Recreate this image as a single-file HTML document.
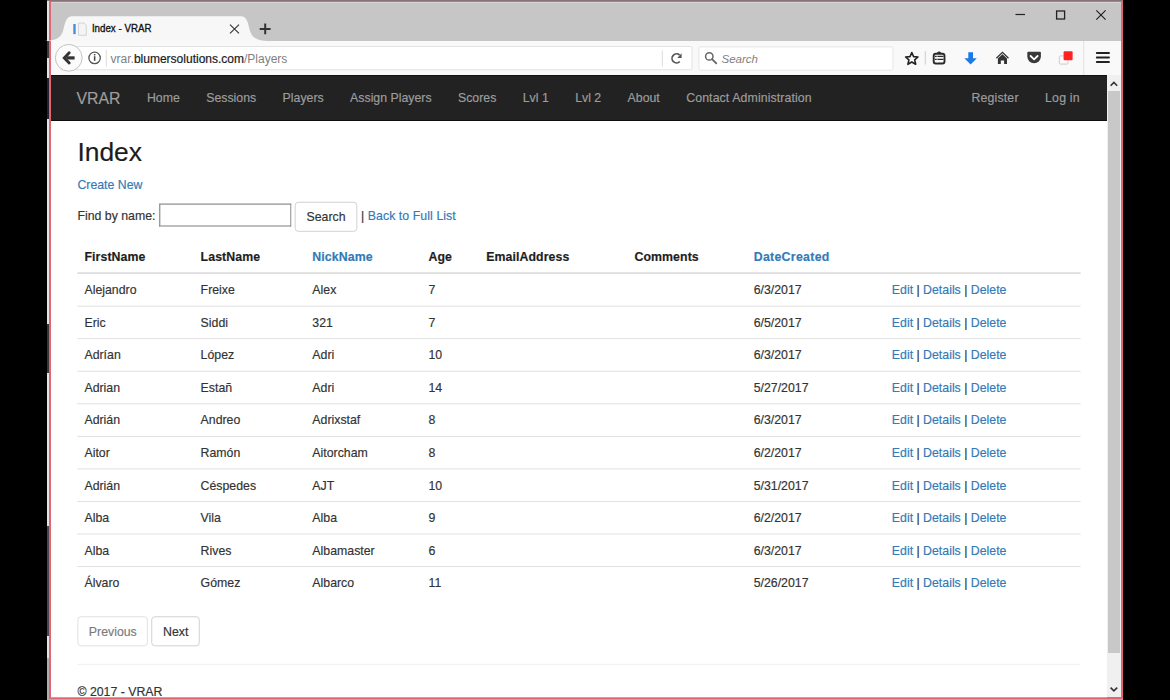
<!DOCTYPE html>
<html><head><meta charset="utf-8">
<style>
*{box-sizing:border-box}
html,body{margin:0;padding:0}
body{width:1170px;height:700px;background:#000;position:relative;overflow:hidden;font-family:"Liberation Sans",sans-serif}
.abs{position:absolute}
#strip{left:47px;top:0;width:2px;height:700px;background:#dfe6e6}
#win{left:49px;top:1px;width:1074px;height:698px;border:2px solid #e46474;border-top-width:1px;background:#cfd6d6;overflow:hidden}
#botstrip{left:49px;top:699px;width:1074px;height:1px;background:#9fb0b0}
/* chrome coordinates relative to body via absolute in body */
#tabbar{left:51px;top:3px;width:1070px;height:38px;background:#c6c6c6}
#toolbar{left:51px;top:41px;width:1070px;height:34px;background:#f9f9f9}
.ttxt{font-size:11.5px;color:#111}
#page{left:51px;top:76px;width:1200px;height:706px;transform:scale(0.88);transform-origin:0 0;background:#fff;overflow:hidden;
 font-family:"Liberation Sans",sans-serif;font-size:14px;line-height:1.42857143;color:#333;-webkit-text-stroke:0.2px currentColor}
#sb{left:1107px;top:75px;width:14px;height:622px;background:#f0f0f0}
#sbthumb{left:1107.5px;top:91px;width:12.5px;height:562px;background:#c8c8c8}

/* bootstrap subset */
#page a{color:#337ab7;text-decoration:none}
.navbar{position:absolute;left:0;top:0;width:1200px;height:51px;background:#222;border-bottom:1px solid #080808}
.container{width:1170px;padding:0 15px;margin:0 auto}
.brand{float:left;margin-left:-16px;padding:16px 15px 14px;font-size:18px;line-height:20px;height:50px;color:#9d9d9d}
.nav{list-style:none;margin:0;padding:0;float:left}
.nav li{float:left}
.nav li span{display:block;padding:15px;line-height:20px;color:#9d9d9d}
.nav.right{float:right;margin-right:-14px}
.nav.right span{letter-spacing:0.2px}
.body-content{padding-top:50px}
h2{font-size:30px;margin:20px 0 10px;line-height:1.1;font-weight:500;color:#1c1c1c}
p{margin:0 0 10px}
.inp{display:inline-block;vertical-align:-7.4px;width:150px;height:26px;border:1px solid #7c7c7c;border-top-color:#6c6c6c;background:#fff;box-shadow:inset 0 0 0 0.4px #aaa}
.btn{display:inline-block;padding:6px 12px;font-size:14px;line-height:20px;border:1px solid #ccc;border-radius:4px;background:#fff;color:#333;vertical-align:middle}
.tbl{width:1140px;margin-bottom:20px}
.tr{display:flex;border-top:1px solid #ddd}
.tr.th{border-top:0;border-bottom:2px solid #ddd;font-weight:bold;color:#1e1e1e;letter-spacing:0.1px}
.th + .tr{border-top:0}
.c{flex:none;padding:8px;line-height:20px;white-space:nowrap;min-height:36px}
hr{margin:20px 0;border:0;border-top:1px solid #eee}
.sep{color:#333}
</style></head>
<body>
<div class="abs" id="strip"></div><div class="abs" style="left:47px;top:41px;width:2px;height:17px;background:#3a3a3a"></div><div class="abs" style="left:47px;top:78px;width:2px;height:41px;background:#1e2430"></div><div class="abs" style="left:47px;top:324px;width:2px;height:49px;background:#343638"></div><div class="abs" style="left:47px;top:526px;width:2px;height:110px;background:#454a52"></div><div class="abs" style="left:47px;top:658px;width:2px;height:42px;background:#a9b0b0"></div>
<div class="abs" style="left:47px;top:0;width:1076px;height:1px;background:#8c7077"></div>
<div class="abs" id="win"></div>
<div class="abs" id="botstrip"></div>
<div class="abs" id="tabbar"></div>
<div class="abs" id="toolbar"></div>

<div class="abs" id="page">
  <div class="navbar"><div class="container">
    <span class="brand">VRAR</span>
    <ul class="nav">
      <li><span>Home</span></li><li><span>Sessions</span></li><li><span>Players</span></li><li><span>Assign Players</span></li><li><span>Scores</span></li><li><span>Lvl 1</span></li><li><span>Lvl 2</span></li><li><span>About</span></li><li><span style="letter-spacing:0.12px">Contact Administration</span></li>
    </ul>
    <ul class="nav right"><li><span>Register</span></li><li><span>Log in</span></li></ul>
  </div></div>
  <div class="container body-content">
    <h2>Index</h2>
    <p><a>Create New</a></p>
    <p>Find by name: <span class="inp"></span> <span class="btn" style="padding-left:12.8px;padding-right:12.8px">Search</span> | <a style="letter-spacing:0.08px">Back to Full List</a></p>
    <div class="tbl">
      <div class="tr th"><div class="c" style="width:132px">FirstName</div><div class="c" style="width:127px">LastName</div><div class="c" style="width:132px"><a>NickName</a></div><div class="c" style="width:65.5px">Age</div><div class="c" style="width:168.5px">EmailAddress</div><div class="c" style="width:135.5px">Comments</div><div class="c" style="width:157px"><a style="letter-spacing:0.35px">DateCreated</a></div><div class="c" style="width:222.5px"></div></div>
      <div class="tr"><div class="c" style="width:132px">Alejandro</div><div class="c" style="width:127px">Freixe</div><div class="c" style="width:132px">Alex</div><div class="c" style="width:65.5px">7</div><div class="c" style="width:168.5px"></div><div class="c" style="width:135.5px"></div><div class="c" style="width:157px">6/3/2017</div><div class="c" style="width:222.5px"><a>Edit</a> | <a>Details</a> | <a>Delete</a></div></div>
      <div class="tr"><div class="c" style="width:132px">Eric</div><div class="c" style="width:127px">Siddi</div><div class="c" style="width:132px">321</div><div class="c" style="width:65.5px">7</div><div class="c" style="width:168.5px"></div><div class="c" style="width:135.5px"></div><div class="c" style="width:157px">6/5/2017</div><div class="c" style="width:222.5px"><a>Edit</a> | <a>Details</a> | <a>Delete</a></div></div>
      <div class="tr"><div class="c" style="width:132px">Adrían</div><div class="c" style="width:127px">López</div><div class="c" style="width:132px">Adri</div><div class="c" style="width:65.5px">10</div><div class="c" style="width:168.5px"></div><div class="c" style="width:135.5px"></div><div class="c" style="width:157px">6/3/2017</div><div class="c" style="width:222.5px"><a>Edit</a> | <a>Details</a> | <a>Delete</a></div></div>
      <div class="tr"><div class="c" style="width:132px">Adrian</div><div class="c" style="width:127px">Estañ</div><div class="c" style="width:132px">Adri</div><div class="c" style="width:65.5px">14</div><div class="c" style="width:168.5px"></div><div class="c" style="width:135.5px"></div><div class="c" style="width:157px">5/27/2017</div><div class="c" style="width:222.5px"><a>Edit</a> | <a>Details</a> | <a>Delete</a></div></div>
      <div class="tr"><div class="c" style="width:132px">Adrián</div><div class="c" style="width:127px">Andreo</div><div class="c" style="width:132px">Adrixstaf</div><div class="c" style="width:65.5px">8</div><div class="c" style="width:168.5px"></div><div class="c" style="width:135.5px"></div><div class="c" style="width:157px">6/3/2017</div><div class="c" style="width:222.5px"><a>Edit</a> | <a>Details</a> | <a>Delete</a></div></div>
      <div class="tr"><div class="c" style="width:132px">Aitor</div><div class="c" style="width:127px">Ramón</div><div class="c" style="width:132px">Aitorcham</div><div class="c" style="width:65.5px">8</div><div class="c" style="width:168.5px"></div><div class="c" style="width:135.5px"></div><div class="c" style="width:157px">6/2/2017</div><div class="c" style="width:222.5px"><a>Edit</a> | <a>Details</a> | <a>Delete</a></div></div>
      <div class="tr"><div class="c" style="width:132px">Adrián</div><div class="c" style="width:127px">Céspedes</div><div class="c" style="width:132px">AJT</div><div class="c" style="width:65.5px">10</div><div class="c" style="width:168.5px"></div><div class="c" style="width:135.5px"></div><div class="c" style="width:157px">5/31/2017</div><div class="c" style="width:222.5px"><a>Edit</a> | <a>Details</a> | <a>Delete</a></div></div>
      <div class="tr"><div class="c" style="width:132px">Alba</div><div class="c" style="width:127px">Vila</div><div class="c" style="width:132px">Alba</div><div class="c" style="width:65.5px">9</div><div class="c" style="width:168.5px"></div><div class="c" style="width:135.5px"></div><div class="c" style="width:157px">6/2/2017</div><div class="c" style="width:222.5px"><a>Edit</a> | <a>Details</a> | <a>Delete</a></div></div>
      <div class="tr"><div class="c" style="width:132px">Alba</div><div class="c" style="width:127px">Rives</div><div class="c" style="width:132px">Albamaster</div><div class="c" style="width:65.5px">6</div><div class="c" style="width:168.5px"></div><div class="c" style="width:135.5px"></div><div class="c" style="width:157px">6/3/2017</div><div class="c" style="width:222.5px"><a>Edit</a> | <a>Details</a> | <a>Delete</a></div></div>
      <div class="tr"><div class="c" style="width:132px">Álvaro</div><div class="c" style="width:127px">Gómez</div><div class="c" style="width:132px">Albarco</div><div class="c" style="width:65.5px">11</div><div class="c" style="width:168.5px"></div><div class="c" style="width:135.5px"></div><div class="c" style="width:157px">5/26/2017</div><div class="c" style="width:222.5px"><a>Edit</a> | <a>Details</a> | <a>Delete</a></div></div>
    </div>
    <div><span class="btn" style="opacity:.65">Previous</span> <span class="btn">Next</span></div>
    <hr>
    <footer><p>&copy; 2017 - VRAR</p></footer>
  </div>
</div>
<div class="abs" id="sb"></div>
<div class="abs" id="sbthumb"></div>

<svg class="abs" style="left:0;top:0" width="1170" height="700" viewBox="0 0 1170 700">
  <!-- tab -->
  <path d="M44,41 C56,41 61,37.5 63,31 C65,24 65.5,16.3 72.5,16.3 L240.5,16.3 C247.5,16.3 248,24 250,31 C252,37.5 257,41 269,41 Z" fill="#f7f7f7"/>
  <!-- tab icon -->
  <rect x="73.3" y="24" width="2.4" height="10.2" fill="#4a90d9"/>
  <path d="M78.5,23 L84,23 L86.3,25.3 L86.3,35.3 L78.5,35.3 Z" fill="#f4f4f4" stroke="#c8ccd0" stroke-width="0.8"/>
  <!-- tab close -->
  <path d="M230,24.6 L239,33.4 M239,24.6 L230,33.4" stroke="#333" stroke-width="1.1"/>
  <!-- new tab + -->
  <path d="M265.2,23.4 V34.3 M259.7,28.9 H270.6" stroke="#333" stroke-width="2"/>
  <!-- window controls -->
  <path d="M1015.5,14.5 H1025" stroke="#222" stroke-width="1.2"/>
  <rect x="1056.6" y="11" width="8" height="8" fill="none" stroke="#222" stroke-width="1.3"/>
  <path d="M1096.3,10.4 L1105.6,19.6 M1105.6,10.4 L1096.3,19.6" stroke="#222" stroke-width="1.2"/>
  <!-- toolbar bottom dark line -->
  <!-- url bar -->
  <rect x="60.5" y="46.5" width="631.5" height="23.3" rx="1.5" fill="#fff" stroke="#e2e2e2" stroke-width="1"/>
  <circle cx="68.75" cy="57.8" r="13.4" fill="#fbfbfb" stroke="#c4c4c4" stroke-width="1"/>
  <path d="M74.6,57.9 H66.5" fill="none" stroke="#333" stroke-width="3.2" stroke-linecap="butt"/><path d="M69.2,52.8 L64.3,57.9 L69.2,63" fill="none" stroke="#333" stroke-width="2.9" stroke-linecap="round" stroke-linejoin="miter"/>
  <circle cx="94.6" cy="57.9" r="5.7" fill="none" stroke="#555" stroke-width="1.3"/>
  <rect x="93.9" y="56.2" width="1.5" height="4.6" fill="#444"/>
  <rect x="93.9" y="54" width="1.5" height="1.4" fill="#444"/>
  <path d="M106.3,50 V66.7" stroke="#ddd" stroke-width="1"/>
  <path d="M662.3,50.3 V66.7" stroke="#ddd" stroke-width="1"/>
  <!-- reload -->
  <path d="M679.6,55.1 A4.5,4.5 0 1 0 679.8,61.5" fill="none" stroke="#555" stroke-width="1.7"/>
  <path d="M677.2,58 L681.6,53.3 L681.6,58 Z" fill="#555"/>
  <!-- search box -->
  <rect x="698.9" y="46.9" width="194" height="23.3" rx="1.5" fill="#fff" stroke="#e6e6e6" stroke-width="1"/>
  <circle cx="709.3" cy="56.4" r="3.7" fill="none" stroke="#666" stroke-width="1.5"/>
  <path d="M712,59.1 L716.3,63.4" stroke="#666" stroke-width="1.8" stroke-linecap="round"/>
  <!-- star -->
  <path d="M911.8,52.6 L913.6,56.6 L918,57 L914.7,59.9 L915.7,64.3 L911.8,62 L907.9,64.3 L908.9,59.9 L905.6,57 L910,56.6 Z" fill="none" stroke="#222" stroke-width="1.6" stroke-linejoin="round"/>
  <path d="M925.3,51.3 V64.5" stroke="#ccc" stroke-width="1"/>
  <!-- reading list / clipboard -->
  <rect x="933.7" y="53.7" width="10.8" height="9.8" rx="2" fill="none" stroke="#2a2a2a" stroke-width="1.9"/>
  <path d="M936.6,53 L939.1,51.2 L941.6,53 Z" fill="#2a2a2a"/>
  <path d="M935,56.4 H943.4 M935,59.3 H943.4" stroke="#2a2a2a" stroke-width="1.3"/>
  <path d="M937.1,55 V62.6" stroke="#f9f9f9" stroke-width="0.7"/>
  <!-- download arrow -->
  <path d="M968.3,52.2 H973 V58.2 H976.8 L970.6,64.4 L964.4,58.2 H968.3 Z" fill="#1a7ae8"/>
  <!-- home -->
  <path d="M996.4,58.2 L1002.45,52.3 L1008.5,58.2" fill="none" stroke="#333" stroke-width="1.3"/>
  <path d="M997.9,58.6 L1002.45,54.3 L1007,58.6 V64.1 H1004.1 V60.6 H1000.8 V64.1 H997.9 Z" fill="#333"/>
  <!-- pocket -->
  <path d="M1027.3,52.7 Q1027.3,51.7 1028.3,51.7 H1039.9 Q1040.9,51.7 1040.9,52.7 V56.6 A6.8,6.6 0 0 1 1027.3,56.6 Z" fill="#3a3a3a"/>
  <path d="M1030.6,56 L1034.1,59.4 L1037.6,56" fill="none" stroke="#fff" stroke-width="1.8" stroke-linecap="round" stroke-linejoin="round"/>
  <!-- red square -->
  <rect x="1059.3" y="55.9" width="8.6" height="8.2" rx="1" fill="none" stroke="#c8c8c8" stroke-width="0.9"/>
  <rect x="1063.6" y="51.3" width="9" height="8.9" rx="1" fill="#f22" />
  <path d="M1083.7,41 V75" stroke="#e2e2e2" stroke-width="1"/>
  <!-- hamburger -->
  <path d="M1096.8,53 H1109 M1096.8,57.5 H1109 M1096.8,62 H1109" stroke="#222" stroke-width="1.9" stroke-linecap="round"/>
  <!-- toolbar/navbar dark line -->
  <rect x="51" y="75" width="1056" height="1" fill="#111"/>
  <!-- scrollbar arrows -->
  <path d="M1110.6,85.8 L1113.9,82.5 L1117.2,85.8" fill="none" stroke="#333" stroke-width="1.6"/>
  <path d="M1110.6,687.6 L1113.9,690.9 L1117.2,687.6" fill="none" stroke="#333" stroke-width="1.6"/>
</svg>
<div class="abs" style="left:91.9px;top:24.1px;font-size:9.75px;line-height:1;color:#111;-webkit-text-stroke:0.3px #111;white-space:nowrap;transform:scaleY(1.08);transform-origin:0 100%">Index - VRAR</div>
<div class="abs" style="left:110.6px;top:53.2px;font-size:12px;line-height:1;color:#808080;white-space:nowrap">vrar.<span style="color:#1a1a24;-webkit-text-stroke:0.2px #1a1a24">blumersolutions.com</span>/Players</div>
<div class="abs" style="left:721.5px;top:53.9px;font-size:11.5px;line-height:1;font-style:italic;color:#808080">Search</div>
</body></html>
